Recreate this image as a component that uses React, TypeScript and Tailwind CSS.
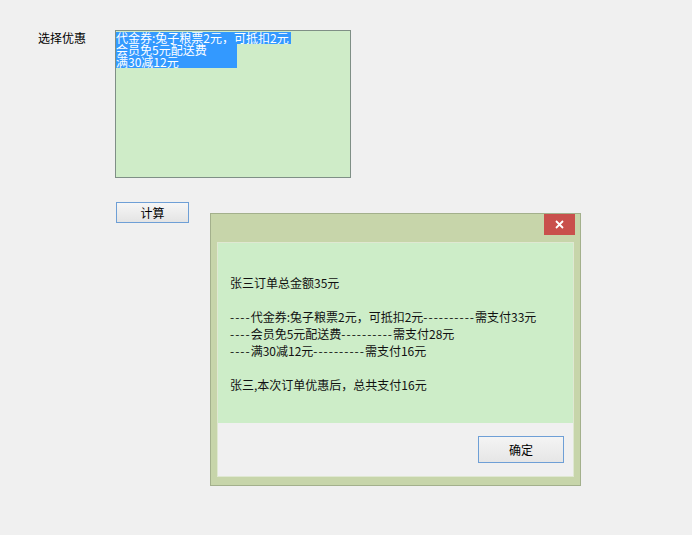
import React from "react";

const font = { fontFamily: '"Noto Sans CJK SC", "Microsoft YaHei", sans-serif' };

function D({ n }: { n: number }) {
  return <span className="tracking-[1px]">{"-".repeat(n)}</span>;
}

export default function App() {
  return (
    <div
      className="relative w-[692px] h-[535px] bg-[#f0f0f0] text-[12px] text-black overflow-hidden"
      style={font}
    >
      <div className="flex pt-[30px] pl-[38px]">
        <div className="w-[77px] leading-[14px] pt-[1px]">选择优惠</div>
        <div className="w-[236px] h-[148px] border border-[#7f8f86] bg-[#cfecc8] pt-[1px]">
          <div className="flex flex-col items-start text-white leading-[12px] text-[12px]">
            <div className="w-[175px] h-[12px] bg-[#3399ff] whitespace-nowrap">
              代金券:兔子粮票2元，可抵扣2元
            </div>
            <div className="w-[121px] h-[12px] bg-[#3399ff] whitespace-nowrap">
              会员免5元配送费
            </div>
            <div className="w-[121px] h-[12px] bg-[#3399ff] whitespace-nowrap">
              满30减12元
            </div>
          </div>
        </div>
      </div>

      <button className="ml-[116px] mt-[24px] w-[73px] h-[21px] border border-[#6e9fd6] bg-gradient-to-b from-[#f6f6f6] to-[#e4e4e4] flex items-center justify-center leading-none text-[12px]">
        计算
      </button>

      <div className="absolute left-[210px] top-[213px] w-[371px] h-[273px] bg-[#c7d5aa] border border-[#a3b08c] flex flex-col">
        <div className="h-[28px] flex justify-end pr-[5px] shrink-0">
          <div className="w-[31px] h-[21px] bg-[#c9504c] flex items-center justify-center">
            <svg width="9" height="9" viewBox="0 0 9 9">
              <path d="M1 1 L8 8 M8 1 L1 8" stroke="white" strokeWidth="1.8" />
            </svg>
          </div>
        </div>
        <div className="ml-[6px] w-[357px] h-[235px] border border-[#dfe8d2] flex flex-col">
          <div className="h-[180px] bg-[#cdedc8] pl-[12px] pt-[31px] text-[12px] leading-[17px] text-[#111]">
            <div>张三订单总金额35元</div>
            <div className="h-[17px]"></div>
            <div className="whitespace-nowrap">
              <D n={4} />代金券:兔子粮票2元，可抵扣2元<D n={10} />需支付33元
            </div>
            <div className="whitespace-nowrap">
              <D n={4} />会员免5元配送费<D n={10} />需支付28元
            </div>
            <div className="whitespace-nowrap">
              <D n={4} />满30减12元<D n={10} />需支付16元
            </div>
            <div className="h-[17px]"></div>
            <div>张三,本次订单优惠后，总共支付16元</div>
          </div>
          <div className="flex-1 bg-[#f0f0f0] flex justify-end items-start pt-[13px] pr-[9px]">
            <button className="w-[86px] h-[27px] border border-[#6e9fd6] bg-gradient-to-b from-[#f4f4f4] to-[#e6e6e6] flex items-center justify-center leading-none text-[12px]">
              确定
            </button>
          </div>
        </div>
      </div>
    </div>
  );
}
